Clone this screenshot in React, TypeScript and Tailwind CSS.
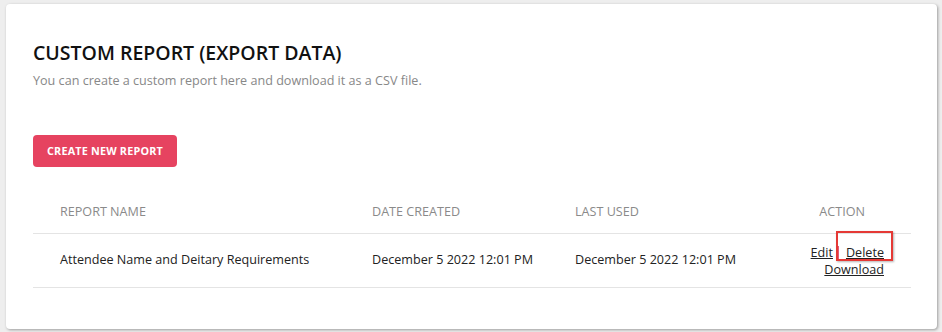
export default function App() {
  return (
    <div className="min-h-screen w-full bg-[#eeeeee] pt-[4px] pl-[6px] pr-[5px] pb-[3px]" style={{ fontFamily: '"Open Sans", "Liberation Sans", sans-serif' }}>
      <div className="h-[325px] rounded-[4px] bg-white shadow-[1px_1px_3px_rgba(0,0,0,0.35)] px-[27px] pt-[35px]">
        <h1 className="text-[19.5px] leading-[28px] font-semibold text-[#111]">CUSTOM REPORT (EXPORT DATA)</h1>
        <p className="mt-[5px] text-[12.6px] leading-[18px] text-[#888]">You can create a custom report here and download it as a CSV file.</p>

        <button className="mt-[45px] h-[32px] w-[144px] rounded-[4px] bg-[#e64360] text-[10.8px] font-bold tracking-[0.2px] text-white">
          CREATE NEW REPORT
        </button>

        <div className="mt-[24px] w-[878px]">
          <div className="grid grid-cols-[312px_203px_212px_151px] h-[43px] items-center border-b border-[#e4e4e4] text-[12.6px] text-[#8a8a8a]">
            <div className="pl-[27px]">REPORT NAME</div>
            <div className="pl-[27px]">DATE CREATED</div>
            <div className="pl-[27px]">LAST USED</div>
            <div className="pr-[46px] text-right">ACTION</div>
          </div>
          <div className="grid grid-cols-[312px_203px_212px_151px] h-[54px] items-center border-b border-[#e4e4e4] text-[12.6px] text-[#222]">
            <div className="pl-[27px]">Attendee Name and Deitary Requirements</div>
            <div className="pl-[27px]">December 5 2022 12:01 PM</div>
            <div className="pl-[27px]">December 5 2022 12:01 PM</div>
            <div className="pr-[27px] text-right leading-[17px]">
              <div className="flex items-center justify-end">
                <a className="underline text-[#222]">Edit</a>
                <span className="ml-[4px] inline-block h-[13px] w-[2px] bg-[#e05a7a]" />
                <span className="relative ml-[7px]">
                  <a className="underline text-[#222]">Delete</a>
                  <span className="absolute -left-[10px] -top-[13px] h-[30px] w-[57px] border-2 border-[#e53935] shadow-[1px_1px_2px_rgba(0,0,0,0.3)]" />
                </span>
              </div>
              <a className="underline text-[#222]">Download</a>
            </div>
          </div>
        </div>
      </div>
    </div>
  );
}
